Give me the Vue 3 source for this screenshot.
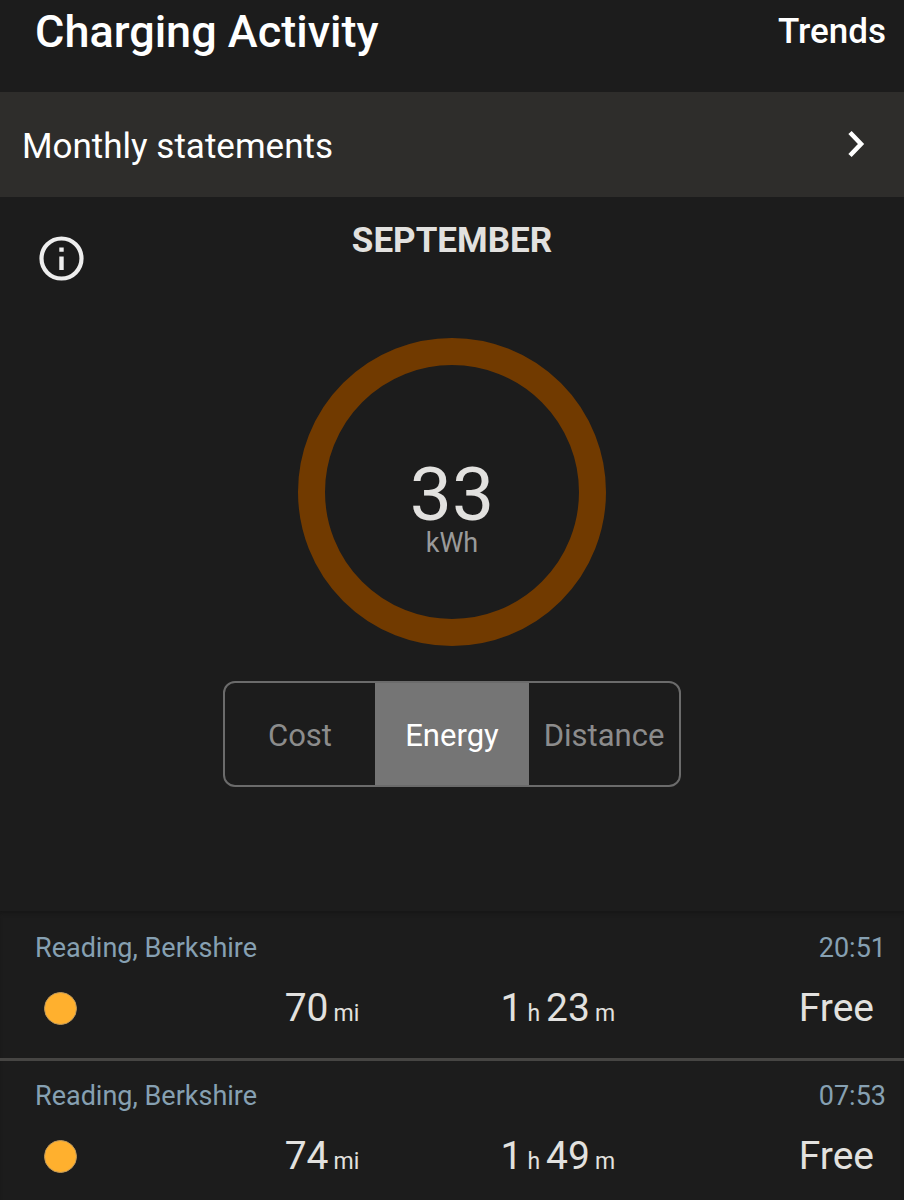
<template>
  <main class="charging">
    <header class="header">
      <h1>Charging Activity</h1>
      <a href="#trends" class="trends">Trends</a>
    </header>

    <a href="#statements" class="statements">
      <span>Monthly statements</span>
      <svg class="chevron" viewBox="0 0 18 28" aria-hidden="true">
        <path d="M3 2.5 L14 14 L3 25.5" fill="none" stroke="currentColor" stroke-width="4.6" />
      </svg>
    </a>

    <section class="summary">
      <div class="summary-head">
        <button type="button" class="info" aria-label="Information">
          <svg viewBox="0 0 46 46" aria-hidden="true">
            <circle cx="23.5" cy="22.5" r="20" fill="none" stroke="currentColor" stroke-width="4.2" />
            <path d="M21.3 11.6h4.4v4.2h-4.4zM21.3 20.4h4.4v13.6h-4.4z" fill="currentColor" />
          </svg>
        </button>
        <h2>SEPTEMBER</h2>
      </div>

      <div class="ring">
        <span class="ring-value">33</span>
        <span class="ring-unit">kWh</span>
      </div>

      <div class="tabs" role="group" aria-label="Chart value">
        <button
          v-for="tab in tabs"
          :key="tab"
          type="button"
          :class="['tab', { active: tab === selected }]"
          :aria-pressed="tab === selected"
          @click="selected = tab"
        >
          {{ tab }}
        </button>
      </div>
    </section>

    <ul class="sessions">
      <li v-for="item in sessions" :key="item.time" class="session">
        <div class="session-top">
          <span>{{ item.place }}</span>
          <time>{{ item.time }}</time>
        </div>
        <div class="session-stats">
          <span class="dot"></span>
          <span>{{ item.miles }}<small>mi</small></span>
          <span class="duration">
            <span>{{ item.hours }}<small>h</small></span>
            <span>{{ item.minutes }}<small>m</small></span>
          </span>
          <span class="cost">{{ item.cost }}</span>
        </div>
      </li>
    </ul>
  </main>
</template>

<script setup>
import { ref } from 'vue'

const tabs = ['Cost', 'Energy', 'Distance']
const selected = ref('Energy')

const sessions = [
  { place: 'Reading, Berkshire', time: '20:51', miles: 70, hours: 1, minutes: 23, cost: 'Free' },
  { place: 'Reading, Berkshire', time: '07:53', miles: 74, hours: 1, minutes: 49, cost: 'Free' }
]
</script>

<style>
body {
  margin: 0;
  background: #1c1c1c;
}
</style>

<style scoped>
.charging {
  min-height: 100vh;
  background: #1c1c1c;
  color: #e2e1df;
  font-family: Roboto, "Liberation Sans", sans-serif;
}

.charging * {
  box-sizing: border-box;
}

h1,
h2 {
  margin: 0;
}

a {
  color: #fff;
  text-decoration: none;
}

button {
  margin: 0;
  padding: 0;
  border: 0;
  background: none;
  color: inherit;
  font-family: inherit;
  cursor: pointer;
}

.header {
  display: flex;
  align-items: center;
  justify-content: space-between;
  padding: 6px 18px 34px 35px;
}

.header h1 {
  color: #fff;
  font-size: 45px;
  font-weight: 500;
  line-height: 52px;
}

.trends {
  padding-bottom: 2px;
  font-size: 35px;
  font-weight: 500;
}

.statements {
  display: flex;
  align-items: center;
  justify-content: space-between;
  padding: 33px 39px 28px 22px;
  background: #2e2d2b;
  font-size: 35px;
  line-height: 44px;
}

.chevron {
  width: 18px;
  height: 28px;
  margin-bottom: 6px;
}

.summary {
  display: flex;
  flex-direction: column;
  align-items: center;
  padding: 22px 0 124px;
}

.summary-head {
  display: grid;
  grid-template-columns: 1fr auto 1fr;
  width: 100%;
  padding: 0 38px;
}

.summary-head h2 {
  font-size: 35px;
  font-weight: 700;
  line-height: 44px;
}

.info {
  width: 46px;
  height: 46px;
  margin-top: 17px;
  color: #eee;
}

.info svg {
  display: block;
}

.ring {
  display: flex;
  flex-direction: column;
  align-items: center;
  justify-content: center;
  width: 308px;
  height: 308px;
  margin: 56px 0 35px;
  padding-top: 36px;
  border: 27px solid #713a00;
  border-radius: 50%;
}

.ring-value {
  font-size: 75px;
  line-height: 66px;
}

.ring-unit {
  color: #9a9a9a;
  font-size: 27px;
  line-height: 32px;
}

.tabs {
  display: grid;
  grid-template-columns: 1fr 154px 1fr;
  width: 458px;
  max-width: 100%;
  border: 2px solid #6b6b6b;
  border-radius: 12px;
  overflow: hidden;
}

.tab {
  padding: 32px 0 29px;
  color: #8c8c8c;
  font-size: 31px;
  line-height: 41px;
}

.tab.active {
  background: #757575;
  color: #fff;
}

.sessions {
  margin: 0;
  padding: 2px 0 0;
  list-style: none;
  box-shadow: inset 0 4px 4px -2px #161616;
}

.session {
  padding: 19px 18px 26px 35px;
  border-bottom: 3px solid #464543;
}

.session:last-child {
  padding-bottom: 20px;
  border-bottom: 0;
}

.session-top {
  display: flex;
  justify-content: space-between;
  color: #86a0b2;
  font-size: 27px;
  line-height: 32px;
}

.session-stats {
  display: grid;
  grid-template-columns: 29fr 26fr 28fr 17fr;
  align-items: center;
  margin-top: 20px;
  padding: 0 12px 0 9px;
  font-size: 39px;
  line-height: 48px;
}

.session-stats small {
  margin-left: 5px;
  font-size: 23px;
  line-height: 24px;
}

.dot {
  width: 33px;
  height: 33px;
  border: 1px solid #c09a5c;
  border-radius: 50%;
  background: #ffb02e;
}

.duration {
  display: flex;
  gap: 6px;
}

.cost {
  text-align: right;
}
</style>
